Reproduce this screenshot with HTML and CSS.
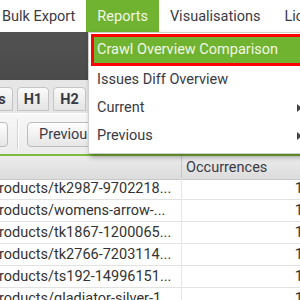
FILE: index.html
```html
<!DOCTYPE html>
<html lang="en">
<head>
  <meta charset="UTF-8">
  <meta name="viewport" content="width=device-width, initial-scale=1.0">
  <title>Reports menu</title>
  <link rel="stylesheet" href="styles.css">
</head>
<body>
  <div class="app">
    <nav class="menubar">
      <span class="menu-item">Bulk Export</span>
      <span class="menu-item active">Reports</span>
      <span class="menu-item">Visualisations</span>
      <span class="menu-item">Licence</span>
    </nav>

    <div class="dark-bar"></div>

    <div class="tabs">
      <span class="tab">ds</span>
      <span class="tab">H1</span>
      <span class="tab">H2</span>
      <span class="tab">Meta</span>
    </div>

    <div class="toolbar">
      <span class="btn btn-cut"></span>
      <span class="sep"></span>
      <span class="btn">Previous</span>
    </div>

    <div class="table">
      <div class="th"></div>
      <div class="th">Occurrences</div>
      <div class="td url">roducts/tk2987-9702218...</div>
      <div class="td num">1</div>
      <div class="td url">roducts/womens-arrow-...</div>
      <div class="td num">1</div>
      <div class="td url">roducts/tk1867-1200065...</div>
      <div class="td num">1</div>
      <div class="td url">roducts/tk2766-7203114...</div>
      <div class="td num">1</div>
      <div class="td url">roducts/ts192-14996151...</div>
      <div class="td num">1</div>
      <div class="td url">roducts/gladiator-silver-1...</div>
      <div class="td num">1</div>
    </div>

    <!-- open Reports dropdown -->
    <div class="dropdown">
      <div class="dd-item selected">Crawl Overview Comparison</div>
      <div class="dd-item">Issues Diff Overview</div>
      <div class="dd-item sub">Current</div>
      <div class="dd-item sub">Previous</div>
    </div>
  </div>
</body>
</html>
```

FILE: styles.css
```css
body {
  margin: 0;
  font-family: Roboto, "Liberation Sans", sans-serif;
  font-size: 14.5px;
  color: #333;
}
.app {
  position: relative;
  width: 300px;
  height: 300px;
  overflow: hidden;
  background: #fff;
}
.menubar {
  display: flex;
  height: 32px;
  margin-left: -9px;
  background: #fff;
  white-space: nowrap;
}
.menu-item {
  display: flex;
  align-items: center;
  padding: 0 11px;
  color: #3a3a44;
}
.menu-item:last-child {
  padding-left: 13px;
}
.menu-item.active {
  background: #70b330;
  color: #f2f6e8;
}
.dark-bar {
  height: 48px;
  background: linear-gradient(#525252, #4a4a4a);
}
.tabs {
  display: flex;
  align-items: flex-end;
  gap: 4px;
  height: 33px;
  margin-left: -17px;
  background: #e6e6e6;
  white-space: nowrap;
}
.tab {
  display: flex;
  align-items: center;
  height: 22px;
  padding: 0 6px;
  margin-bottom: 2px;
  border: 1px solid #c4c4c4;
  border-radius: 4px 4px 0 0;
  background: linear-gradient(#fafafa, #e4e4e4);
  font-weight: bold;
  color: #3a3a44;
}
.toolbar {
  display: flex;
  align-items: center;
  gap: 9px;
  height: 40px;
  margin-left: -24px;
  border-top: 1px solid #fff;
  background: linear-gradient(#f7f7f7, #ececec);
  border-bottom: 2px solid #7cbb3c;
}
.btn {
  display: flex;
  align-items: center;
  height: 23px;
  padding: 0 11px;
  border: 1px solid #bcbcbc;
  border-radius: 4px;
  background: linear-gradient(#fdfdfd, #e6e6e6);
  color: #3a3a44;
}
.btn-cut {
  width: 8px;
}
.sep {
  width: 1px;
  height: 30px;
  background: #d4d4d4;
  box-shadow: 1px 0 0 #fff;
}
.table {
  display: grid;
  grid-template-columns: 182px 122px;
  grid-auto-rows: 22px;
  width: 304px;
}
.th {
  display: flex;
  align-items: center;
  height: 23px;
  padding-left: 4px;
  background: linear-gradient(#ececec, #dcdcdc);
  border-bottom: 1px solid #c8c8c8;
  border-right: 1px solid #c8c8c8;
  color: #3a3a44;
}
.td {
  display: flex;
  align-items: center;
  border-bottom: 1px solid #e2e2e2;
  border-right: 1px solid #e6e6e6;
  white-space: nowrap;
  overflow: hidden;
}
.url {
  margin-left: -1px;
}
.num {
  justify-content: flex-end;
}
.dropdown {
  position: absolute;
  left: 88px;
  top: 32px;
  width: 230px;
  padding: 1px 0 3px 2px;
  background: #fff;
  border: 1px solid #cfcfcf;
  box-shadow: 2px 3px 5px rgba(0, 0, 0, 0.35);
  white-space: nowrap;
}
.dd-item {
  position: relative;
  height: 28px;
  line-height: 28px;
  padding-left: 6px;
  color: #3a3a44;
}
.dd-item.selected {
  height: 26px;
  line-height: 26px;
  padding-left: 3px;
  border: 3px solid #f00;
  background: #70b330;
  color: #f2f6e8;
}
.dd-item.sub::after {
  content: "";
  position: absolute;
  left: 206px;
  top: 10px;
  border-left: 5px solid #444;
  border-top: 4px solid transparent;
  border-bottom: 4px solid transparent;
}
```
